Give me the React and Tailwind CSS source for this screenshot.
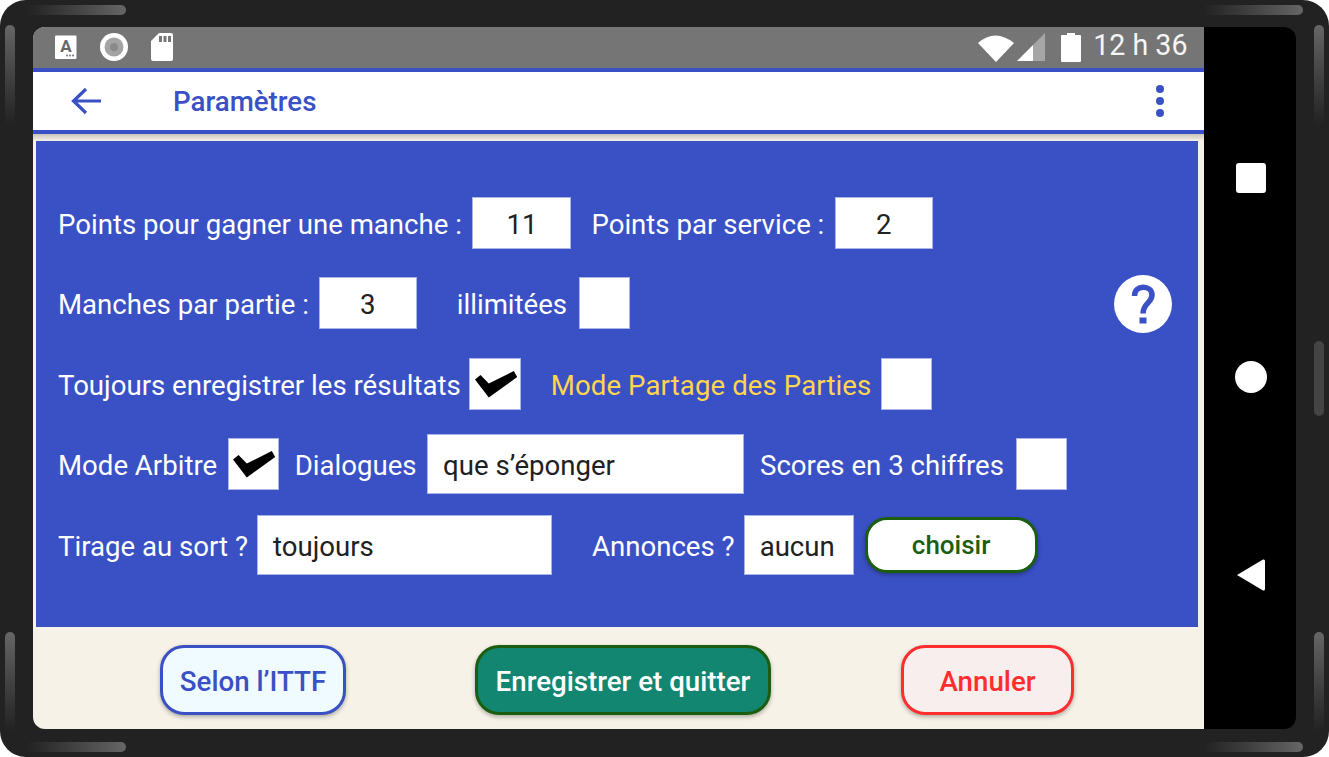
import React from "react";

const Check = () => (
  <svg width="51" height="50" viewBox="0 0 51 50" className="block shrink-0">
    <path d="M5 20.5 L10.5 16 L18.8 24.5 L43.8 12 L47.2 18 L18.8 38.5 Z" fill="#000" />
  </svg>
);

const Box = ({ w = "w-[52px]", checked, children, h = "h-[52px]", left }) => (
  <div className={`${w} ${h} bg-white border border-[#aab4e6] flex items-center ${left ? "justify-start pl-[15px]" : "justify-center"} text-[#212121] shrink-0`}>
    {checked ? <Check /> : <span className="pt-[4px]">{children}</span>}
  </div>
);

const Row = ({ children }) => <div className="h-[80.5px] flex items-center pl-[22px]">{children}</div>;

const Label = ({ className = "", children }) => <span className={`pt-[4px] ${className}`}>{children}</span>;

const Grip = ({ className }) => <div className={`absolute rounded-md ${className}`} />;

export default function App() {
  return (
    <div className="relative w-[1329px] h-[757px] overflow-hidden bg-white" style={{ fontFamily: "Roboto, sans-serif" }}>
      <div className="relative w-full h-full rounded-[26px] bg-[#222222] pt-[27px] pl-[33px] pr-[33px] pb-[28px]">
        <Grip className="left-[26px] top-[5px] w-[100px] h-[10px] bg-gradient-to-r from-[#222222] to-[#666666]" />
        <Grip className="right-[26px] top-[5px] w-[100px] h-[10px] bg-gradient-to-l from-[#666666] to-[#222222]" />
        <Grip className="left-[26px] bottom-[5px] w-[100px] h-[10px] bg-gradient-to-r from-[#222222] to-[#666666]" />
        <Grip className="right-[26px] bottom-[5px] w-[100px] h-[10px] bg-gradient-to-r from-[#222222] to-[#666666]" />
        <Grip className="left-[5px] top-[25px] w-[10px] h-[100px] bg-gradient-to-b from-[#666666] to-[#222222]" />
        <Grip className="right-[5px] top-[25px] w-[10px] h-[100px] bg-gradient-to-b from-[#666666] to-[#222222]" />
        <Grip className="left-[5px] bottom-[25px] w-[10px] h-[100px] bg-gradient-to-b from-[#666666] to-[#222222]" />
        <Grip className="right-[5px] bottom-[25px] w-[10px] h-[100px] bg-gradient-to-b from-[#666666] to-[#222222]" />
        <Grip className="right-[5px] top-[341px] w-[10px] h-[75px] bg-[#444444]" />

        <div className="flex h-[702px] rounded-[12px] overflow-hidden">
          <div className="w-[1170.5px] flex flex-col bg-[#f6f2e7]">
            <div className="h-[41px] bg-[#757575] flex items-center shrink-0 text-white">
              <svg width="22" height="24" viewBox="0 0 22 24" className="ml-[22px] mb-[1px]">
                <rect x="0" y="0.5" width="21.5" height="23.5" rx="1" fill="#fff" />
                <text x="11" y="17" textAnchor="middle" fontSize="17" fontWeight="700" fill="#666" fontFamily="Roboto">A</text>
                <circle cx="12" cy="20.5" r="1" fill="#777" /><circle cx="15" cy="20.5" r="1" fill="#777" /><circle cx="18" cy="20.5" r="1" fill="#777" />
              </svg>
              <svg width="28" height="28" viewBox="0 0 28 28" className="ml-[23px] mb-[1px]">
                <circle cx="14" cy="14" r="14" fill="#fff" />
                <circle cx="14" cy="14" r="9.5" fill="#a3a3a3" />
                <circle cx="14" cy="14" r="4" fill="#8a8a8a" />
              </svg>
              <svg width="24" height="29" viewBox="0 0 24 29" className="ml-[22px]">
                <path d="M9 0 H21 Q23 0 23 2 V26 Q23 28 21 28 H3 Q1 28 1 26 V8 Z" fill="#fff" />
                <rect x="9" y="3" width="3" height="6" fill="#777" /><rect x="13.5" y="3" width="3" height="6" fill="#777" /><rect x="18" y="3" width="3" height="6" fill="#777" />
              </svg>
              <div className="flex-1" />
              <svg width="36" height="28" viewBox="0 0 36 28" className="mr-[3px]">
                <path d="M0 9 Q17 -6 36 9 L18 28 Z" fill="#fff" />
              </svg>
              <svg width="28" height="29" viewBox="0 0 28 29">
                <path d="M0 28 L16 12 V28 Z" fill="#fff" />
                <path d="M16 12 L28 0 V28 H16 Z" fill="#a6a6a6" />
              </svg>
              <svg width="20" height="29" viewBox="0 0 20 29" className="ml-[16px]">
                <path d="M6 0 H14 V2 H19 Q20 2 20 3 V28 Q20 29 19 29 H1 Q0 29 0 28 V3 Q0 2 1 2 H6 Z" fill="#fff" />
              </svg>
              <span className="ml-[12px] mr-[16px] mb-[4px] text-[28.6px] leading-none text-[#f5f5f5]">12 h 36</span>
            </div>
            <div className="h-[66px] shrink-0 bg-white border-y-[4px] border-[#3a50c5] flex items-center relative">
              <svg width="34" height="30" viewBox="0 0 34 30" className="ml-[37px]" fill="none" stroke="#3a50c5" strokeWidth="3.2">
                <path d="M31 15 H4 M16 3 L3.5 15 L16 27" />
              </svg>
              <span className="ml-[69px] pt-[2px] text-[27.7px] font-medium text-[#3a50c5]">Paramètres</span>
              <div className="absolute right-[40px] top-[13px] flex flex-col gap-[4px]">
                <div className="w-2 h-2 rounded-full bg-[#3a50c5]" />
                <div className="w-2 h-2 rounded-full bg-[#3a50c5]" />
                <div className="w-2 h-2 rounded-full bg-[#3a50c5]" />
              </div>
            </div>
            <div className="h-[7px] shrink-0 bg-gradient-to-b from-[#c9c5ba] to-[#f6f2e7]" />
            <div className="relative ml-[3px] mr-[6px] h-[486px] bg-[#3a50c5] text-white text-[27.6px] leading-none pt-[41.5px] shrink-0 whitespace-nowrap">
              <Row>
                <Label>Points pour gagner une manche :</Label>
                <Box w="w-[99px] ml-[10.5px]">11</Box>
                <Label className="ml-[20px]">Points par service :</Label>
                <Box w="w-[98px] ml-[10.5px]">2</Box>
              </Row>
              <Row>
                <Label>Manches par partie :</Label>
                <Box w="w-[98px] ml-[10px]">3</Box>
                <Label className="ml-[40px]">illimitées</Label>
                <Box w="w-[51px] ml-[12px]" />
              </Row>
              <Row>
                <Label>Toujours enregistrer les résultats</Label>
                <Box w="w-[52px] ml-[8.5px]" checked />
                <Label className="ml-[29.5px] text-[#ffd54f] tracking-[0.1px]">Mode Partage des Parties</Label>
                <Box w="w-[51px] ml-[9.5px]" />
              </Row>
              <Row>
                <Label>Mode Arbitre</Label>
                <Box w="w-[51px] ml-[10.5px]" checked />
                <Label className="ml-[16px]">Dialogues</Label>
                <Box w="w-[317px] ml-[10.5px]" h="h-[60px]" left>que s’éponger</Box>
                <Label className="ml-[16px]">Scores en 3 chiffres</Label>
                <Box w="w-[51px] ml-[12px]" />
              </Row>
              <Row>
                <Label>Tirage au sort ?</Label>
                <Box w="w-[295px] ml-[9px]" h="h-[60px]" left>toujours</Box>
                <Label className="ml-[40px]">Annonces ?</Label>
                <Box w="w-[110px] ml-[9px]" h="h-[60px]" left>aucun</Box>
                <button className="ml-[11px] w-[173px] h-[56px] rounded-[22px] bg-white border-[3.5px] border-[#1b5e0f] text-[#1b5e0f] text-[26px] font-medium shadow-[0_2px_4px_rgba(0,0,0,0.3)]">choisir</button>
              </Row>
              <svg width="58" height="58" viewBox="0 0 58 58" className="absolute right-[26px] top-[134px]">
                <circle cx="29" cy="29" r="29" fill="#fff" />
                <path d="M20.5 21 C20.5 9 38 10 38 20 C38 28 29 28 29 38.5" fill="none" stroke="#3a50c5" strokeWidth="5.5" />
                <rect x="25.5" y="42.5" width="7" height="6" fill="#3a50c5" />
              </svg>
            </div>
            <div className="flex-1 relative flex items-center text-[27.7px] font-medium pt-[3px]">
              <button className="ml-[127px] w-[186px] h-[70px] pt-[4px] rounded-[24px] bg-[#effbff] border-[3.5px] border-[#3a50c5] text-[#3a50c5] shadow-[0_2px_4px_rgba(0,0,0,0.3)]">Selon l’ITTF</button>
              <button className="ml-[129px] w-[296px] h-[70px] pt-[4px] rounded-[24px] bg-[#128670] border-[3.5px] border-[#1b5e0f] text-white shadow-[0_2px_4px_rgba(0,0,0,0.3)]">Enregistrer et quitter</button>
              <button className="ml-[130px] w-[173px] h-[70px] pt-[4px] rounded-[24px] bg-[#f8eeee] border-[3.5px] border-[#ff2d2d] text-[#ff2d2d] shadow-[0_2px_4px_rgba(0,0,0,0.3)]">Annuler</button>
            </div>
          </div>
          <div className="flex-1 bg-black flex flex-col items-center pt-[136px] pl-[2px]">
            <div className="w-[30px] h-[30px] rounded-[3px] bg-white" />
            <div className="w-[32px] h-[32px] rounded-full bg-white mt-[168px]" />
            <svg width="30" height="34" viewBox="0 0 30 34" className="mt-[165px]">
              <path d="M1 17 L27 1.5 Q29 1 29 3 V31 Q29 33 27 32.5 Z" fill="#fff" />
            </svg>
          </div>
        </div>
      </div>
    </div>
  );
}
